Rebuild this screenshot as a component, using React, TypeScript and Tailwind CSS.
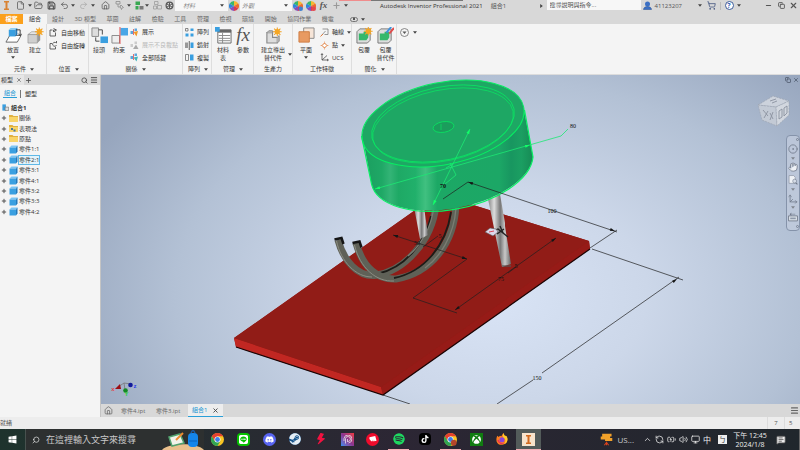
import React from "react";
import { FaWindows, FaXbox, FaDiscord, FaSteam, FaSpotify, FaTiktok, FaLine } from "react-icons/fa6";
import { BsLightningFill } from "react-icons/bs";
import {
  Search, X, Plus, Menu, House, ShoppingCart, ChevronUp, Save, FolderOpen, Undo2, Redo2, File,
  Volume2, Monitor, BatteryCharging, Hand, Move3d, CircleDot, Copy, Minus, MessageSquareText, RefreshCcw,
} from "lucide-react";

type Kids = { children?: React.ReactNode };

function Caret({ className = "" }: { className?: string }) {
  return (
    <svg viewBox="0 0 6 4" className={`h-[3px] w-[4px] shrink-0 ${className}`} aria-hidden="true">
      <path d="M0 0h6L3 4z" fill="#444" />
    </svg>
  );
}

function Ico({ children, className = "size-[9px]" }: Kids & { className?: string }) {
  return (
    <svg viewBox="0 0 18 18" className={`shrink-0 ${className}`} fill="none" aria-hidden="true">
      {children}
    </svg>
  );
}

function Sun({ x, y }: { x: number; y: number }) {
  return (
    <g transform={`translate(${x} ${y})`} stroke="#f0a020" strokeWidth="1.1">
      <path d="M0-4.6V4.6M-4.6 0H4.6M-3.3-3.3 3.3 3.3M3.3-3.3-3.3 3.3" />
      <circle r="2.8" fill="#f5a623" stroke="none" />
    </g>
  );
}

const Cube = () => (
  <Ico className="size-[9px]">
    <path d="M1 5l4-4h12l-2 4z" fill="#7cc6f5" />
    <path d="M1 5h13v12H1z" fill="#3a9fe0" />
    <path d="M14 5l3-4v12l-3 4z" fill="#2279bb" />
  </Ico>
);

const Folder = ({ mark = false }: { mark?: boolean }) => (
  <Ico className="size-[9px]">
    <path d="M0 2h7l2 2h9v12H0z" fill="#e0b040" />
    <path d="M0 6h18v10H0z" fill="#f8d468" />
    {mark && <path d="M4 8h4v4H4zM9 11h4v4H9z" fill="#46759a" />}
  </Ico>
);

function Group({ label, caret = true, className, children }: Kids & { label: string; caret?: boolean; className: string }) {
  return (
    <section className={`flex shrink-0 flex-col border-r border-[#dedede] ${className}`} aria-label={label}>
      <div className="flex h-10">{children}</div>
      <div className="flex h-2.5 items-center justify-center gap-1 whitespace-nowrap">
        {label}
        {caret && <Caret />}
      </div>
    </section>
  );
}

function Big({ icon, lines, caret = false, side = false, className }: { icon: React.ReactNode; lines: string[]; caret?: boolean; side?: boolean; className: string }) {
  return (
    <button type="button" className={`relative flex shrink-0 flex-col items-center pt-[3px] ${className}`}>
      {icon}
      <span className="mt-0.5 flex flex-col leading-[8px] whitespace-nowrap">
        {lines.map((l) => <span key={l}>{l}</span>)}
      </span>
      {caret && <Caret className="mt-0.5" />}
      {side && <Caret className="absolute right-0 bottom-2" />}
    </button>
  );
}

function Small({ icon, text, caret = false, dim = false }: { icon: React.ReactNode; text: string; caret?: boolean; dim?: boolean }) {
  return (
    <button type="button" className={`flex h-[13px] items-center gap-[3px] whitespace-nowrap ${dim ? "text-[#b9b9b9]" : ""}`}>
      {icon}
      {text}
      {caret && <Caret />}
    </button>
  );
}

function Ball({ mark = "" }: { mark?: string }) {
  return (
    <Ico className="size-[10px]">
      <path d="M9 9V0a9 9 0 0 1 7.8 4.5z" fill="#f6b82f" />
      <path d="M9 9l7.8-4.5a9 9 0 0 1 0 9z" fill="#ee6b2d" />
      <path d="M9 9l7.800 4.500A9 9 0 0 1 9 18z" fill="#d93a50" />
      <path d="M9 9v9a9 9 0 0 1-7.800-4.500z" fill="#8650b8" />
      <path d="M9 9l-7.800 4.500a9 9 0 0 1 0-9z" fill="#2e86dc" />
      <path d="M9 9L1.200 4.500A9 9 0 0 1 9 0z" fill="#38b56b" />
      {mark && <circle cx="14" cy="14" r="4" fill={mark} />}
    </Ico>
  );
}

const ToolCell = ({ w, label, children }: Kids & { w: string; label: string }) => (
  <button type="button" aria-label={label} className={`flex h-full shrink-0 items-center justify-center ${w}`}>{children}</button>
);

function TitleBar() {
  return (
    <header className="flex h-[11px] items-center text-[#555]">
      <ToolCell w="w-3" label="Inventor">
        <Ico><path d="M4 0h10v3h-3v12h3v3H4v-3h3V3H4z" fill="#d98232" /></Ico>
      </ToolCell>
      <ToolCell w="w-4" label="新建"><File className="size-[9px]" /></ToolCell>
      <ToolCell w="w-1" label="新建選項"><Caret /></ToolCell>
      <ToolCell w="w-[13px]" label="開啟"><FolderOpen className="size-[9px]" /></ToolCell>
      <ToolCell w="w-3" label="儲存"><Save className="size-[9px]" strokeWidth={3} /></ToolCell>
      <ToolCell w="w-3.5" label="退回"><Undo2 className="size-[9px]" /></ToolCell>
      <ToolCell w="w-1" label="退回選項"><Caret /></ToolCell>
      <ToolCell w="w-4" label="重做"><Redo2 className="size-[9px] text-[#aaa]" /></ToolCell>
      <ToolCell w="w-1" label="重做選項"><Caret /></ToolCell>
      <ToolCell w="w-5" label="首頁"><House className="size-[9px]" /></ToolCell>
      <ToolCell w="w-2" label="選取">
        <Ico><path d="M2 1h8v5H2zM6 6v6h5M12 8l5 5-3 1-1 3-3-7z" stroke="#888" strokeWidth="1.5" /></Ico>
      </ToolCell>
      <ToolCell w="w-3" label="選取選項"><Caret /></ToolCell>
      <ToolCell w="w-2" label="更新">
        <Ico><path d="M1 1h9v7H1zM1 10h6v7H1z" fill="#39a852" /><path d="M9 10h8v7H9z" fill="#777" /></Ico>
      </ToolCell>
      <ToolCell w="w-2" label="更新選項"><Caret /></ToolCell>
      <ToolCell w="w-3" label="零件">
        <Ico><path d="M3 1h7v6H3zM1 10h6v6H1zM9 9h8v7H9z" stroke="#999" strokeWidth="1.500" /></Ico>
      </ToolCell>
      <ToolCell w="w-3" label="外觀輪">
        <Ico><circle cx="9" cy="9" r="8" fill="#555" /><circle cx="9" cy="9" r="5.500" fill="#ddd" /><path d="M9 3v12M4 6l10 6M14 6L4 12" stroke="#555" strokeWidth="2" /></Ico>
      </ToolCell>
      <div className="flex h-full w-[53px] shrink-0 items-center bg-[#f7f7f7] pr-1 pl-2">
        <select aria-label="材料" className="min-w-0 flex-1 appearance-none text-[6px] leading-[8px] text-[#888] italic"><option>材料</option></select>
        <Caret />
      </div>
      <ToolCell w="w-3" label="調整"><Ball /></ToolCell>
      <div className="flex h-full w-[52px] shrink-0 items-center bg-[#f7f7f7] pr-1 pl-[2px]">
        <select aria-label="外觀" className="min-w-0 flex-1 appearance-none text-[6px] leading-[8px] text-[#888] italic"><option>外觀</option></select>
        <Caret />
      </div>
      <ToolCell w="w-3" label="調整外觀"><Ball mark="#3f7fd0" /></ToolCell>
      <ToolCell w="w-[13px]" label="清除外觀"><Ball mark="#e5484d" /></ToolCell>
      <ToolCell w="w-[13px]" label="參數"><i className="font-['Liberation_Serif',serif] text-[9px] leading-none font-bold">fx</i></ToolCell>
      <ToolCell w="w-3" label="加入"><Plus className="size-[9px] text-[#999]" strokeWidth={3} /></ToolCell>
      <ToolCell w="w-2" label="自訂"><Caret /></ToolCell>
      <h1 className="ml-[30px] shrink-0 text-[6px] whitespace-pre text-[#333]">Autodesk Inventor Professional 2021</h1>
      <span className="ml-2 shrink-0 text-[6px]">組合1</span>
      <div className="flex h-full flex-1 items-center justify-end">
        <svg viewBox="0 0 4 6" className="mr-1 h-1 w-[3px]" aria-hidden="true"><path d="M0 0l4 3-4 3z" fill="#444" /></svg>
        <input aria-label="搜尋" placeholder="搜尋說明與指令..." className="h-[10px] w-[94px] self-start bg-[#f7f7f7] pl-[3px] text-[6px] leading-[10px] placeholder:text-[#555]" />
      </div>
      <button type="button" className="flex shrink-0 items-center gap-[3px] pl-0.5 text-[6px]">
        <Ico><circle cx="9" cy="6" r="5" fill="#3b6fc4" /><path d="M1 17c0-8 16-8 16 0z" fill="#3b6fc4" stroke="#234a8c" /></Ico>
        41123207
      </button>
      <Caret className="ml-4" />
      <ToolCell w="w-[18px]" label="購物車"><ShoppingCart className="size-[9px] text-[#3b4d7a]" /></ToolCell>
      <span className="h-2 w-px shrink-0 bg-[#bbb]" />
      <ToolCell w="w-4" label="說明">
        <span className="flex size-[9px] items-center justify-center rounded-full border border-[#3b5c9a] bg-white text-[7px] leading-none font-bold text-[#2d62b5]">?</span>
      </ToolCell>
      <Caret />
      <ToolCell w="ml-5 w-3.5" label="最小化"><Minus className="size-[7px]" strokeWidth={4} /></ToolCell>
      <ToolCell w="w-3" label="還原"><Copy className="size-[7px]" strokeWidth={3} /></ToolCell>
      <ToolCell w="w-[13px]" label="關閉"><X className="size-[9px]" strokeWidth={3} /></ToolCell>
    </header>
  );
}

const ribbonTabs = ["設計", "3D 模型", "草圖", "註解", "檢驗", "工具", "管理", "檢視", "環境", "開始", "協同作業", "機電"];

function RibbonTabs() {
  return (
    <nav className="flex h-[13px] items-end text-[6px] leading-[10px] text-[#666]">
      <button type="button" className="h-2.5 w-[23px] shrink-0 bg-[#fba01c] font-bold text-white">檔案</button>
      <button type="button" className="h-2.5 w-6 shrink-0 bg-[#f4f4f4] text-[#333]">組合</button>
      <div className="ml-[5px] flex w-[282px] shrink-0 justify-between whitespace-nowrap">
        {ribbonTabs.map((t) => <button type="button" key={t}>{t}</button>)}
      </div>
      <button type="button" aria-label="功能區顯示" className="ml-4 flex h-2.5 items-center gap-[3px]">
        <span className="flex h-[5px] w-2 items-center justify-center rounded-sm border border-[#777]"><span className="size-[2px] bg-[#555]" /></span>
        <Caret />
      </button>
    </nav>
  );
}

const big = "size-[17px]";

function Ribbon() {
  return (
    <div className="flex border-b border-[#dcdcdc] bg-[#f4f4f4] text-[6px] leading-[8px] text-[#333]">
      <Group label="元件" className="w-[47px] pl-0.5">
        <Big className="w-[22px]" lines={["放置"]} caret icon={
          <Ico className={big}><path d="M1 16l4-7h12l-4 7z" stroke="#666" fill="#fff" /><path d="M4 3l2-2h7l-1 2z" fill="#8fd0f7" /><path d="M4 3h7v7H4z" fill="#3a9fe0" /><path d="M11 3l2-2v7l-2 2z" fill="#2279bb" /><path d="M12 3h4v6M14 7l2 2 2-2" stroke="#333" /></Ico>} />
        <Big className="w-[22px]" lines={["建立"]} icon={
          <Ico className={big}><path d="M1 8l4-3h8l-2 3z" fill="#e5e5e5" stroke="#888" strokeWidth=".6" /><path d="M1 8h10v9H1z" fill="#cfcfcf" stroke="#888" strokeWidth=".6" /><path d="M11 8l3-3v9l-3 3z" fill="#999" /><Sun x={13} y={5} /></Ico>} />
      </Group>
      <Group label="位置" className="w-[42px] pl-0.5">
        <div className="flex flex-col pt-0.5">
          <Small text="自由移動" icon={<Ico><path d="M2 4v12h11V9M2 4h5M9 1l6 3-5 4M14 4H9v4" stroke="#555" strokeWidth="1.800" /></Ico>} />
          <Small text="自由旋轉" icon={<Ico><path d="M2 5v11h11v-4M2 5h4M15 8a4 4 0 1 1-2-5l2 1V0" stroke="#555" strokeWidth="1.800" /></Ico>} />
        </div>
      </Group>
      <Group label="關係" className="w-[94px]">
        <Big className="w-5" lines={["接頭"]} icon={
          <Ico className={big}><path d="M1 1h7v9H1z" fill="#ddd" stroke="#888" /><path d="M10 10h8v7h-8z" fill="#3a9fe0" /><path d="M5 11v4h4M8 3h4v5" stroke="#444" /></Ico>} />
        <Big className="w-5" lines={["約束"]} icon={
          <Ico className={big}><path d="M1 9h8v8H1z" fill="#eee" stroke="#888" /><path d="M10 1h8v8h-8z" fill="#49a6e6" /><path d="M9.500 0v18" stroke="#e04848" /></Ico>} />
        <div className="flex flex-col pt-0.5 pl-px">
          <Small text="展示" icon={<Ico><path d="M1 6h5v6H1zM9 1h5v5H9z" fill="#5ba6dc" /><path d="M7 8l9-2-3 11z" fill="#f09a28" /><path d="M7 2v12" stroke="#d44" strokeWidth="1.500" /></Ico>} />
          <Small text="展示不良載點" dim icon={<Ico><path d="M1 6h5v6H1zM9 1h5v5H9z" fill="#ccc" /><path d="M6 16L12 7l5 9z" fill="#aaa" /></Ico>} />
          <Small text="全部隱藏" icon={<Ico><path d="M1 6h5v6H1zM9 1h5v5H9z" fill="#5ba6dc" /><path d="M7 9l9-2-3 10z" fill="#42b5bd" /><path d="M7 2v12" stroke="#d44" strokeWidth="1.500" /></Ico>} />
        </div>
      </Group>
      <Group label="陣列" className="w-[29px] pl-0.5">
        <div className="flex flex-col pt-0.5">
          <Small text="陣列" icon={<Ico><path d="M1 1h5v5H1z" stroke="#666" strokeWidth="1.500" /><path d="M11 1h6v5h-6zM1 11h6v6H1zM11 11h6v6h-6z" fill="#3a9fe0" /></Ico>} />
          <Small text="鏡射" icon={<Ico><path d="M0 3h6v11H0z" fill="#999" /><path d="M11 3h6v11h-6z" fill="#3a9fe0" /><path d="M8.500 0v18" stroke="#333" strokeWidth="1.500" /></Ico>} />
          <Small text="複製" icon={<Ico><path d="M1 3h6v12H1z" stroke="#666" strokeWidth="1.500" /><path d="M10 3h7v12h-7z" fill="#3a9fe0" /></Ico>} />
        </div>
      </Group>
      <Group label="管理" className="w-[42px] pl-px">
        <Big className="w-5" lines={["材料", "表"]} icon={
          <Ico className={big}><path d="M3 3h14v14H3z" fill="#fff" stroke="#666" /><path d="M3 3h14v3H3z" fill="#666" /><path d="M4 9h12M4 12h12M4 14.500h12M8 6v11" stroke="#888" /><path d="M0 0h5v5H0z" fill="#3a9fe0" /></Ico>} />
        <Big className="w-5" lines={["參數"]} icon={
          <i className="h-[17px] font-['Liberation_Serif',serif] text-[19px] leading-[16px] text-[#555]">fx</i>} />
      </Group>
      <Group label="生產力" caret={false} className="w-[39px]">
        <Big className="w-[38px]" lines={["建立導出", "替代件"]} side icon={
          <Ico className={big}><path d="M2 6h6v5h5v6H2z" fill="#ddd" stroke="#888" strokeWidth="1.200" /><path d="M2 6l2-2h4v2M13 11l2-2v6l-2 2" stroke="#888" fill="#bbb" /><Sun x={13} y={5} /></Ico>} />
      </Group>
      <Group label="工作特徵" caret={false} className="w-[59px]">
        <Big className="w-[26px]" lines={["平面"]} caret icon={
          <Ico className={big}><path d="M6 1h11v11H6z" fill="#f6e5d8" stroke="#888" /><path d="M1 5h11v11H1z" fill="#e89a62" stroke="#cf7c42" /></Ico>} />
        <div className="flex flex-col pt-0.5 pl-px">
          <Small text="軸線" caret icon={<Ico><path d="M5 2h11v11H9M2 16l9-10" stroke="#777" strokeWidth="1.500" /><path d="M1 17l5-5" stroke="#e07c3a" strokeWidth="2" /></Ico>} />
          <Small text="點" caret icon={<Ico><path d="M9 1v16M1 9h16" stroke="#e8a070" strokeWidth="1.500" /><path d="M9 4l5 5-5 5-5-5z" fill="#fff" stroke="#e07c3a" strokeWidth="2" /></Ico>} />
          <Small text="UCS" icon={<Ico><path d="M4 2v12h12M4 14L14 5M2 4l2-3 2 3M14 12l3 2-3 2" stroke="#444" strokeWidth="1.500" /></Ico>} />
        </div>
      </Group>
      <Group label="簡化" className="w-[45px] pl-px">
        <Big className="w-[22px]" lines={["包覆"]} icon={
          <Ico className={big}><path d="M1 5l3-3h11v12l-3 3H1z" fill="#ddd" stroke="#777" /><path d="M3 7h5V5h5v6l-2 3H3z" fill="#35b86b" /><Sun x={13} y={4.500} /></Ico>} />
        <Big className="w-[21px]" lines={["包覆", "替代件"]} icon={
          <Ico className={big}><path d="M1 5l3-3h11v12l-3 3H1z" fill="#ddd" stroke="#777" /><path d="M3 7h5V5h5v6l-2 3H3z" fill="#35b86b" /><path d="M10 6l5-6" stroke="#3c91df" strokeWidth="2" /><path d="M13 7l5-6" stroke="#e14d4d" strokeWidth="2" /></Ico>} />
      </Group>
      <button type="button" aria-label="更多" className="flex h-4 items-center gap-1 pl-[3px]">
        <Ico className="size-[9px]"><circle cx="9" cy="9" r="8" stroke="#666" strokeWidth="1.500" /><path d="M5 7h8l-4 5z" fill="#555" /></Ico>
        <Caret />
      </button>
    </div>
  );
}

const tree = [
  { text: "關係", kind: "folder" }, { text: "表現法", kind: "marked" }, { text: "原點", kind: "folder" },
  { text: "零件1:1", kind: "part" }, { text: "零件2:1", kind: "part", selected: true }, { text: "零件3:1", kind: "part" },
  { text: "零件4:1", kind: "part" }, { text: "零件3:2", kind: "part" }, { text: "零件3:3", kind: "part" }, { text: "零件4:2", kind: "part" },
];

function Browser() {
  return (
    <aside className="w-[101px] shrink-0 border-r border-[#c4c4c4] bg-[#f4f4f4] text-[6px] leading-[8px] text-[#333]">
      <div className="flex h-[10px] items-center bg-[#d8d8d8] text-[#555]">
        <button type="button" className="flex h-full w-6 items-center gap-[3px] bg-[#e6e6e6] pl-px text-[#333]">模型<X className="size-[6px]" /></button>
        <button type="button" aria-label="新增" className="ml-px"><Plus className="size-[7px]" strokeWidth={3} /></button>
        <button type="button" aria-label="搜尋" className="ml-auto"><Search className="size-[7px]" strokeWidth={3} /></button>
        <button type="button" aria-label="功能表" className="mr-0.5 ml-0.5"><Menu className="size-[8px]" strokeWidth={3} /></button>
      </div>
      <div className="flex h-[17px] items-center">
        <button type="button" className="ml-[3px] h-[9px] w-3.5 border-b border-[#2a9fd8] text-[#1493d2]">組合</button>
        <span className="mx-[3px] h-2 w-px bg-[#777]" />
        <button type="button" className="ml-px h-[9px]">塑型</button>
      </div>
      <div className="flex h-[11px] items-center gap-0.5 pl-0.5 font-bold">
        <Ico className="size-[7px]"><path d="M1 1h9v16H1z" fill="#3a9fe0" /><path d="M8 8h9v9H8z" fill="#ddd" stroke="#666" strokeWidth="1.500" /></Ico>
        組合1
      </div>
      <ul className="grid h-[104px] grid-rows-10">
        {tree.map((n) => (
          <li key={n.text} className="flex items-center pl-[1px]">
            <button type="button" aria-label={`展開 ${n.text}`} className="mr-0.5"><Plus className="size-[6px] text-[#555]" strokeWidth={4} /></button>
            {n.kind === "part" ? <Cube /> : <Folder mark={n.kind === "marked"} />}
            <span className={n.selected ? "ml-px bg-[#e3f3fb] outline outline-[#5fb8e6]" : "ml-px"}>{n.text}</span>
          </li>
        ))}
      </ul>
    </aside>
  );
}

function Arrow({ x, y, a, c = "#151515" }: { x: number; y: number; a: number; c?: string }) {
  return <path d="M0 0l-5-1.500v3z" transform={`translate(${x} ${y}) rotate(${a})`} fill={c} />;
}

function Model() {
  return (
    <svg viewBox="101 75 699 329" preserveAspectRatio="xMidYMid slice" className="absolute inset-0 size-full" role="img" aria-label="組合1 模型">
      <defs>
        <radialGradient id="sky" gradientUnits="userSpaceOnUse" cx="0" cy="0" r="1" gradientTransform="translate(490 295) scale(450 310)">
          <stop offset="0" stopColor="#d9e4f6" /><stop offset=".35" stopColor="#ccd7e9" /><stop offset=".7" stopColor="#b3c1d5" /><stop offset="1" stopColor="#96a5bd" />
        </radialGradient>
        <linearGradient id="side" gradientUnits="userSpaceOnUse" x1="365" y1="0" x2="533" y2="0">
          <stop offset="0" stopColor="#1b9f60" /><stop offset=".1" stopColor="#1fa866" /><stop offset=".15" stopColor="#33b476" /><stop offset=".2" stopColor="#1ea965" />
          <stop offset=".3" stopColor="#21b06b" /><stop offset=".36" stopColor="#40c080" /><stop offset=".43" stopColor="#1ca865" />
          <stop offset=".8" stopColor="#1ca766" /><stop offset=".87" stopColor="#189660" /><stop offset=".93" stopColor="#1b9f62" /><stop offset="1" stopColor="#178a55" />
        </linearGradient>
        <linearGradient id="rod"><stop offset="0" stopColor="#777" /><stop offset=".3" stopColor="#ddd" /><stop offset=".55" stopColor="#777" /><stop offset=".75" stopColor="#c8c8c8" /><stop offset="1" stopColor="#666" /></linearGradient>
      </defs>
      <rect x="101" y="75" width="699" height="329" fill="url(#sky)" />

      <path d="M234 338L438 194 589 241 590 249 383 395 236 347z" fill="#951c17" />
      <path d="M234 338L381 387 383 395 236 347z" fill="#c12722" />
      <path d="M381 387L589 241 590 249 383 395z" fill="#961b17" />
      <path d="M234 338L438 194 589 241 381 387z" fill="#911c17" />
      <path d="M236 347L383 395 590 249" stroke="#1a0505" strokeWidth="1.200" fill="none" />

      <g fill="none">
        <path d="M338 240C344 262 358 276 374 275.500C405 272 432 240 436 205" stroke="#5f6157" strokeWidth="7" />
        <path d="M377 274C405 268 425 243 431 216" stroke="#1c1c18" strokeWidth="1.800" />
        <path d="M336.500 241C341 262 356 277 372 277" stroke="#8b8d82" strokeWidth="1" />
        <path d="M434 205C432 228 420 246 408 256" stroke="#7b7d73" strokeWidth="1.300" />
        <path d="M356 243C363 268 378 280 396 279C430 273 454 245 456 205" stroke="#5f6157" strokeWidth="7" />
        <path d="M394 278C424 272 446 246 451 212" stroke="#1c1c18" strokeWidth="1.800" />
        <path d="M354.500 245C360 268 376 282 394 281" stroke="#8b8d82" strokeWidth="1" />
        <path d="M456 208C454 236 440 257 425 268" stroke="#7b7d73" strokeWidth="1.300" />
        <path d="M334.500 239.500l7-1.500 2 6M352.500 243l7-1.500 2 6" stroke="#151515" strokeWidth="2.500" />
      </g>
      <path d="M414 207L424 207 428 235 420 239z" fill="url(#rod)" />
      <path d="M487 194L500 194 505 223 505 226 511 264 502 267z" fill="url(#rod)" />
      <path d="M502 266h9" stroke="#555" strokeWidth="1.200" />

      <path d="M362 134L371.500 184A82.300 41 -11.600 0 0 533 157L524 110z" fill="url(#side)" />
      <ellipse cx="443" cy="123.500" rx="82.300" ry="41" transform="rotate(-11.600 443 123.500)" fill="#1ea764" />
      <path d="M361.500 136L371.500 184A82.300 42 -11.600 0 0 533 157L524.500 110" stroke="#07f263" strokeWidth="1.200" fill="url(#side)" fillOpacity="0" />
      <g fill="none" stroke="#07ee62">
        <ellipse cx="443" cy="123.500" rx="82.300" ry="41" transform="rotate(-11.600 443 123.500)" strokeWidth="1" />
        <ellipse cx="443" cy="123.500" rx="72.500" ry="36.500" transform="rotate(-11.600 443 123.500)" strokeWidth=".7" />
        <ellipse cx="443" cy="125.500" rx="71.500" ry="35.500" transform="rotate(-11.600 443 125.500)" strokeWidth=".6" />
        <ellipse cx="443.500" cy="127" rx="10.500" ry="5.300" transform="rotate(-9 443.500 127)" fill="#1b9d5c" strokeWidth=".7" />
        <path d="M441 124v6" strokeWidth=".6" />
      </g>
      <g stroke="#1de873" strokeWidth=".8" fill="none">
        <path d="M375 189L561 136 568 129M470 129L433 205M450 163L456 175 445 184M446 168L453 164" />
      </g>
      <Arrow x={375} y={189} a={164} c="#12ff68" /><Arrow x={530} y={145} a={-16} c="#12ff68" />
      <Arrow x={470} y={129} a={-64} c="#12ff68" /><Arrow x={433} y={205} a={116} c="#12ff68" />

      <g stroke="#202020" strokeWidth=".7" fill="none">
        <path d="M443 199L468 182 617 232M590 248L617 230M592 249L683 280M679 277L542 373M533 380L497 404M383 395L410 404" />
        <path d="M393 235L467 259 413 298 457 313M455 310L556 238M438 236L423 247M516 267L508 273" />
        <path d="M490 232l8-3 10 8" strokeWidth="1.300" />
      </g>
      <Arrow x={468} y={182} a={199} /><Arrow x={615} y={231} a={19} /><Arrow x={677} y={279} a={-35} />
      <Arrow x={393} y={235} a={198} /><Arrow x={467} y={259} a={18} /><Arrow x={455} y={310} a={145} /><Arrow x={556} y={238} a={-35} />
      <path d="M485 232l5-4 6 1 2 3-5 4z" fill="#ddd8ea" stroke="#555" strokeWidth=".6" /><path d="M489 232l5-1" stroke="#d84a5a" />
      <path d="M500 226l3 7M497 234l7-5" stroke="#222" strokeWidth="1.300" />
      <g className="font-['Liberation_Serif',serif] text-[6px]" fill="#111" textAnchor="middle">
        <text x="573" y="128">80</text><text x="443" y="188" fontWeight="bold">70</text><text x="552" y="213">100</text><text x="537" y="380">150</text>
        <text x="417" y="245">50</text><text x="440" y="238">5</text><text x="501" y="281">75</text><text x="516" y="268">5</text>
      </g>

      <g>
        <path d="M124 383l-6 4M124 383l7 1M124 383l1 7" stroke="#777" strokeWidth=".8" />
        <path d="M115 389l5-5 1 5z" fill="#9b0f14" /><circle cx="130.500" cy="385" r="2.300" fill="#111a9a" /><circle cx="125.500" cy="390.500" r="2.300" fill="#128a22" />
        <g className="font-['Liberation_Sans',sans-serif] text-[6px] font-bold" textAnchor="middle">
          <text x="113" y="391" fill="#e04448">x</text><text x="135" y="388" fill="#2a3bea">z</text><text x="126.500" y="396" fill="#26d43c">Y</text>
        </g>
      </g>
    </svg>
  );
}

function ViewCube() {
  return (
    <svg viewBox="757 94 34 34" className="absolute top-[19px] right-[9px] size-[34px]" aria-label="ViewCube" role="img">
      <path d="M758 105L773 96 789 101 776 107z" fill="#ccd2dc" stroke="#959dab" strokeWidth=".6" strokeDasharray="2 1" />
      <path d="M758 105L776 107 777 126 762 120z" fill="#c3cad5" stroke="#9aa1ae" strokeWidth=".6" strokeDasharray="2 1" />
      <path d="M776 107L789 101V115L777 126z" fill="#d2d7df" stroke="#959dab" strokeWidth=".6" strokeDasharray="2 1" />
      <path d="M763 110l5 6M768 111l-4 7M770 113l3 6M773 112l-3 8M779 111v8l3-2v-8zM784 108v8l3-3v-7zM770 101l6-2M772 103l5-2" fill="none" stroke="#8b929f" strokeWidth=".9" />
    </svg>
  );
}

function Viewport() {
  const tool = "size-[10px]";
  return (
    <main className="relative min-h-0 flex-1 overflow-hidden bg-[#b4c2d6]">
      <Model />
      <div className="absolute top-0.5 right-[1px] flex gap-0.5 text-[#4d596c]"><Copy className="size-[6px]" strokeWidth={3} /><X className="size-[6px]" strokeWidth={3} /></div>
      <ViewCube />
      <div className="absolute top-[60px] right-0 flex h-24 w-3.5 flex-col items-center justify-between rounded-sm border border-[#8593aa] bg-[#c0cbdc]/80 py-[2px] text-[#717b8c]">
        <span className="size-[3px] self-end rounded-full border border-[#7a8496]" />
        <button type="button" aria-label="導覽輪"><CircleDot className={tool} /></button>
        <Caret className="opacity-50" />
        <button type="button" aria-label="平移"><Hand className={`${tool} fill-[#eef1f5]`} /></button>
        <button type="button" aria-label="縮放">
          <Ico className={tool}><path d="M2 1h8l3 3v11H2z" fill="#eef1f5" stroke="#7a8393" /><circle cx="12" cy="11" r="3.500" fill="#d5dce6" stroke="#6d7686" /><path d="M14 14l3 3" stroke="#6d7686" strokeWidth="2" /></Ico>
        </button>
        <Caret className="opacity-50" />
        <button type="button" aria-label="環轉"><Move3d className={tool} /></button>
        <Caret className="opacity-50" />
        <button type="button" aria-label="面向">
          <Ico className={tool}><path d="M1 7h16v9H1z" fill="#dce2ea" stroke="#6d7686" strokeWidth="1.500" /><path d="M4 10h10v3H4z" fill="#8f99a9" /><path d="M3 4l3-3v6z" fill="#6d7686" /><path d="M6 4h7" stroke="#6d7686" /></Ico>
        </button>
        <span className="size-[3px] self-end rounded-full border border-[#7a8496]" />
      </div>
    </main>
  );
}

function DocTabs() {
  return (
    <div className="flex h-[13px] shrink-0 items-center bg-[#d8d8d8] text-[6px] leading-[8px] text-[#666]">
      <button type="button" aria-label="首頁" className="ml-[3px]"><House className="size-[9px]" /></button>
      <button type="button" className="ml-2 w-[35px] text-left">零件4.ipt</button>
      <button type="button" className="w-8 text-left">零件3.ipt</button>
      <div className="flex h-full w-[35px] items-center justify-between border-b border-[#2a9fd8] bg-[#ededed] pr-1 pl-1">
        <button type="button" className="text-[#1493d2]">組合1</button>
        <button type="button" aria-label="關閉 組合1"><X className="size-[7px] text-[#444]" strokeWidth={3} /></button>
      </div>
      <button type="button" aria-label="文件清單" className="mr-px ml-auto"><Menu className="size-[9px]" strokeWidth={3} /></button>
    </div>
  );
}

function AppTile({ label, active = false, children }: Kids & { label: string; active?: boolean }) {
  return (
    <button type="button" aria-label={label} className="flex h-full items-center justify-center">
      <span className={`flex h-full w-[21px] items-center justify-center border-b ${active ? "border-[#f2aeb4]" : "border-transparent"}`}>{children}</span>
    </button>
  );
}

function ChromeLogo({ badge = false }: { badge?: boolean }) {
  return (
    <Ico className="size-[13px]">
      <circle cx="9" cy="9" r="9" fill="#f9c623" />
      <path d="M1.200 4.500A9 9 0 0 1 16.800 4.500H9L5 11z" fill="#e5402f" />
      <path d="M1.200 4.500A9 9 0 0 0 9 18l4-7-8 0z" fill="#32a553" />
      <circle cx="9" cy="9" r="4.200" fill="#fff" /><circle cx="9" cy="9" r="3.300" fill="#3e7de8" />
      {badge && <circle cx="13.500" cy="13.500" r="4" fill="#b5452b" />}
    </Ico>
  );
}

function Taskbar() {
  const tray = "size-[9px] shrink-0";
  return (
    <footer className="flex h-[21px] shrink-0 items-center bg-linear-to-r from-[#1e332d] via-[#2c2634] to-[#20272c] text-[#eee]">
      <button type="button" aria-label="開始" className="flex w-[25px] shrink-0 justify-center"><FaWindows className="size-[9px] text-white" /></button>
      <div className="flex h-full w-[179px] shrink-0 items-center border-l border-[#47514e] bg-[#2d3030] pl-1.5">
        <Search className="size-[8px] -scale-x-100" />
        <input aria-label="在這裡輸入文字來搜尋" placeholder="在這裡輸入文字來搜尋" className="ml-1.5 h-4 w-[117px] bg-transparent text-[9px] placeholder:text-[#c8c8c8]" />
        <svg viewBox="0 0 42 21" className="h-[21px] w-[42px] shrink-0" aria-hidden="true">
          <path d="M0 21C6 14 34 13 42 21z" fill="#eac08d" />
          <path d="M7 8l11-3 4 9-12 3z" fill="#f2f2ea" stroke="#52a26e" strokeWidth="1.500" /><path d="M14 11l7-7" stroke="#ee8b32" strokeWidth="2" />
          <rect x="26" y="4" width="10" height="14" rx="4" fill="#1586ea" /><path d="M29 4q2-5 4 0" fill="none" stroke="#1a5ca8" strokeWidth="1.500" /><path d="M27 12h8" stroke="#0d62bd" />
        </svg>
      </div>
      <nav className="ml-px grid h-full w-[310px] shrink-0 grid-cols-12">
        <AppTile label="Chrome"><ChromeLogo /></AppTile>
        <AppTile label="LINE"><span className="rounded-sm bg-[#06c100] p-[2px]"><FaLine className="size-[9px] text-white" /></span></AppTile>
        <AppTile label="Discord"><span className="rounded-full bg-[#5865f2] p-[2px]"><FaDiscord className="size-[9px] text-white" /></span></AppTile>
        <AppTile label="Steam"><span className="rounded-full bg-[#12518a]"><FaSteam className="size-[12px] text-[#e6eef5]" /></span></AppTile>
        <AppTile label="Bolt"><BsLightningFill className="size-[12px] rotate-12 text-[#f21240]" /></AppTile>
        <AppTile label="P"><span className="flex size-[13px] items-center justify-center bg-linear-to-bl from-[#f23535] via-[#8b3390] to-[#1f8bf0]"><Ico><path d="M5 17V7a5 5 0 1 1 5 6M2 12V7a8 8 0 1 1 9 9M9 14V8" stroke="#eee" strokeWidth="1.500" /></Ico></span></AppTile>
        <AppTile label="Riot"><span className="flex size-[13px] items-center justify-center rounded-full bg-[#ef0c2c]"><Ico className="size-[8px]"><path d="M1 5l13-3 3 11-5 1-1-4v4H9L8 10v4H5L1 9z" fill="#fff" /></Ico></span></AppTile>
        <AppTile label="Spotify" active><FaSpotify className="size-[12px] rounded-full text-[#1ed760]" /></AppTile>
        <AppTile label="TikTok"><span className="rounded-sm bg-black p-[2px]"><FaTiktok className="size-[8px] text-white" /></span></AppTile>
        <AppTile label="Chrome 2" active><ChromeLogo badge /></AppTile>
        <AppTile label="Xbox"><span className="bg-[#107c10] p-[2px]"><FaXbox className="size-[9px] text-white" /></span></AppTile>
        <AppTile label="Firefox">
          <Ico className="size-[12px]">
            <path d="M2 4l2 2 2-2 2 1 3-5 2 4 2 0 2 4a8.500 8.500 0 0 1-16 5C0 9 1 6 2 4z" fill="#ff7d1f" />
            <path d="M11 0l2 4 3 1c3 6 0 10-4 12 3-4 3-8-1-10-1-2-1-4 0-7z" fill="#ffc928" />
            <circle cx="9" cy="10" r="3.800" fill="#8a45d8" /><path d="M2 11a7 7 0 0 0 11 4c-5 1-8-1-9-5z" fill="#ee2f58" />
          </Ico>
        </AppTile>
      </nav>
      <button type="button" aria-label="Inventor" className="ml-px flex h-full w-[25px] shrink-0 items-center justify-center border-b border-[#f2aeb4] bg-[#535b5a]">
        <span className="flex size-[13px] items-center justify-center bg-[#f8e3cb]"><Ico><path d="M4 0h10v3h-3v12h3v3H4v-3h3V3H4z" fill="#d2691e" /></Ico></span>
      </button>
      <div className="flex h-full flex-1 items-center justify-end gap-[3px]">
        <button type="button" className="mr-1.5 flex items-center gap-1 text-[8px] text-[#ccc]">
          <Ico className="size-[13px]"><path d="M3 1h13v4h-2v2h3v4H7V9H1V5h2z" fill="#f2a12a" /><path d="M9 12v5M6 17l3-4 3 4" stroke="#d8421e" strokeWidth="1.500" /></Ico>
          US...
        </button>
        <ChevronUp className={tray} />
        <RefreshCcw className={tray} />
        <BatteryCharging className={tray} />
        <Volume2 className={tray} />
        <Monitor className={tray} />
        <span className="text-[8px] leading-none">中</span>
        <span className="mr-[3px] ml-1 flex size-[9px] items-center justify-center bg-[#eee] text-[7px] leading-none text-[#333]">ㄅ</span>
        <time className="flex w-[34px] flex-col text-center text-[7px] leading-[9px] whitespace-nowrap">
          <span>下午 12:45</span>
          <span>2024/1/8</span>
        </time>
        <button type="button" aria-label="通知" className="mr-2.5 ml-1.5"><MessageSquareText className="size-[10px] fill-[#eee] text-[#555]" /></button>
        <span className="h-full w-px bg-[#666]" />
      </div>
    </footer>
  );
}

export default function App() {
  return (
    <div className="relative flex h-screen w-full flex-col overflow-hidden bg-[#d8d8d8] font-['Open_Sans','Noto_Sans_CJK_TC',sans-serif] leading-none">
      <TitleBar />
      <RibbonTabs />
      <Ribbon />
      <div className="flex min-h-0 flex-1">
        <Browser />
        <div className="flex min-w-0 flex-1 flex-col">
          <Viewport />
          <DocTabs />
        </div>
      </div>
      <div className="flex h-3 shrink-0 items-center bg-[#ededed] text-[6px] text-[#555]">
        <span className="flex-1">就緒</span>
        <span className="flex h-full w-[17px] items-center justify-center border-l border-[#dcdcdc]">7</span>
        <span className="flex h-full w-4 items-center border-l border-[#dcdcdc] pl-1">5</span>
      </div>
      <Taskbar />
      <div className="absolute top-0 left-[339px] flex h-px w-[124px] bg-[#777]"><span className="w-8 bg-[#f08c8c]" /></div>
    </div>
  );
}
